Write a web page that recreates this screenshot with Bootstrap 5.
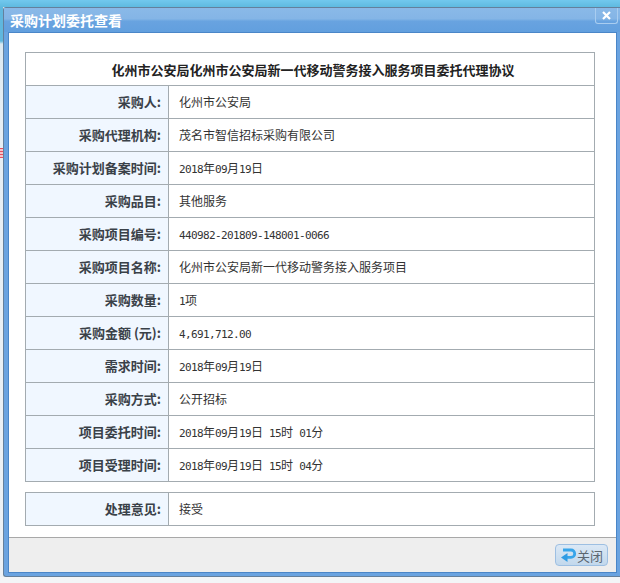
<!DOCTYPE html>
<html lang="zh">
<head>
<meta charset="utf-8">
<title>采购计划委托查看</title>
<link href="https://cdn.jsdelivr.net/npm/bootstrap@5.3.0/dist/css/bootstrap.min.css" rel="stylesheet">
<style>
html,body{height:583px;overflow:hidden}
body{background:linear-gradient(#eef3f7,#f3f5f7);font-family:"Noto Sans CJK SC","Liberation Sans",sans-serif;font-size:12px;color:#333;position:relative}
.top-strip{height:7px;background:linear-gradient(#72c8ee,#5fbae0)}
.side-strip{position:absolute;left:0;top:7px;width:3px;height:570px;background:linear-gradient(#5fb7de 0,#5fb7de 34px,#dbe9f2 37px,#e6eef4 100px,#eef2f6 100%)}
.side-mark{position:absolute;left:0;top:148px;width:3px;height:10px;background:repeating-linear-gradient(#e8505f 0 1px,#f4c4ca 1px 3px)}
.win{margin-left:3px;height:570px;width:617px;border:1px solid #64809c;border-right:0;border-radius:3px 0 0 3px;background:#6aa3e0;display:flex;flex-direction:column;padding:0 3px 3px 4px}
.win-head{height:24px;flex:none;margin:0 -3px 0 -4px;padding:0 3px 0 6px;background:linear-gradient(#8ab9e8 0,#84b5e6 45%,#68a3e0 55%,#629fde 100%);display:flex;align-items:center;justify-content:space-between}
.win-title{color:#fff;font-weight:700;font-size:14px;line-height:1}
.win-close{width:23px;height:16px;margin-top:-8px;margin-right:-1px;border:1px solid #a9cdf0;border-top:0;border-radius:0 0 3px 3px;color:#fff;display:flex;align-items:center;justify-content:center}
.win-body{flex:1;min-height:0;background:#fff;border:1px solid #4a86c8;display:flex;flex-direction:column}
.win-main{flex:1;padding:19px 22px 0 16px}
.form-tbl{width:570px;table-layout:fixed;border-collapse:collapse;margin:0;color:#333}
.form-tbl td{border:1px solid #a3abb0;height:33px;padding:0;vertical-align:middle;font-size:12px;line-height:1;background:#fff}
.form-tbl .col-a{width:143px}
.form-tbl .t-head{text-align:center;font-size:13px;font-weight:700;color:#222;padding-left:6px}
.form-tbl .t-label{background:#f0f7ff;text-align:right;font-weight:700;font-size:13px;color:#3a4148;padding:0 7px 2px 0}
.form-tbl .t-val{padding-left:10px;color:#333}
.dg{font-family:"DejaVu Sans Mono",monospace;font-size:11px;letter-spacing:-.62px}
.gap-tbl{margin-top:10px}
.win-foot{height:35px;flex:none;background:#eeeeee;border-top:1px solid #a8a8a8;display:flex;justify-content:flex-end;align-items:center;padding-right:8px}
.close-btn{width:53px;height:22px;padding:0;border:1px solid #9dbfe2;border-radius:4px;background:linear-gradient(#dbe8f5,#c2d8ec);color:#5b6670;font-size:13px;display:flex;align-items:center;justify-content:center;line-height:1}
</style>
</head>
<body>
<div class="top-strip"></div>
<div class="side-strip"></div>
<div class="side-mark"></div>
<div class="win">
  <div class="win-head">
    <span class="win-title">采购计划委托查看</span>
    <span class="win-close"><svg width="9" height="9" viewBox="0 0 9 9"><path d="M1 1l7 7M8 1l-7 7" stroke="#fff" stroke-width="2.2"/></svg></span>
  </div>
  <div class="win-body">
    <div class="win-main">
      <table class="form-tbl">
        <colgroup><col class="col-a"><col></colgroup>
        <tr><td colspan="2" class="t-head">化州市公安局化州市公安局新一代移动警务接入服务项目委托代理协议</td></tr>
        <tr><td class="t-label">采购人:</td><td class="t-val">化州市公安局</td></tr>
        <tr><td class="t-label">采购代理机构:</td><td class="t-val">茂名市智信招标采购有限公司</td></tr>
        <tr><td class="t-label">采购计划备案时间:</td><td class="t-val"><span class="dg">2018</span>年<span class="dg">09</span>月<span class="dg">19</span>日</td></tr>
        <tr><td class="t-label">采购品目:</td><td class="t-val">其他服务</td></tr>
        <tr><td class="t-label">采购项目编号:</td><td class="t-val"><span class="dg">440982-201809-148001-0066</span></td></tr>
        <tr><td class="t-label">采购项目名称:</td><td class="t-val">化州市公安局新一代移动警务接入服务项目</td></tr>
        <tr><td class="t-label">采购数量:</td><td class="t-val"><span class="dg">1</span>项</td></tr>
        <tr><td class="t-label">采购金额 (元):</td><td class="t-val"><span class="dg">4,691,712.00</span></td></tr>
        <tr><td class="t-label">需求时间:</td><td class="t-val"><span class="dg">2018</span>年<span class="dg">09</span>月<span class="dg">19</span>日</td></tr>
        <tr><td class="t-label">采购方式:</td><td class="t-val">公开招标</td></tr>
        <tr><td class="t-label">项目委托时间:</td><td class="t-val"><span class="dg">2018</span>年<span class="dg">09</span>月<span class="dg">19</span>日<span class="dg"> 15</span>时<span class="dg"> 01</span>分</td></tr>
        <tr><td class="t-label">项目受理时间:</td><td class="t-val"><span class="dg">2018</span>年<span class="dg">09</span>月<span class="dg">19</span>日<span class="dg"> 15</span>时<span class="dg"> 04</span>分</td></tr>
      </table>
      <table class="form-tbl gap-tbl">
        <colgroup><col class="col-a"><col></colgroup>
        <tr><td class="t-label">处理意见:</td><td class="t-val">接受</td></tr>
      </table>
    </div>
    <div class="win-foot">
      <button type="button" class="btn close-btn"><svg width="17" height="17" viewBox="0 0 17 17"><path d="M3 3h8a3.6 3.6 0 0 1 0 7.4H7" fill="none" stroke="#37a5ea" stroke-width="2.8"/><path d="M7.5 6v9L1 10.5z" fill="#2f9be3"/></svg>关闭</button>
    </div>
  </div>
</div>
</body>
</html>
